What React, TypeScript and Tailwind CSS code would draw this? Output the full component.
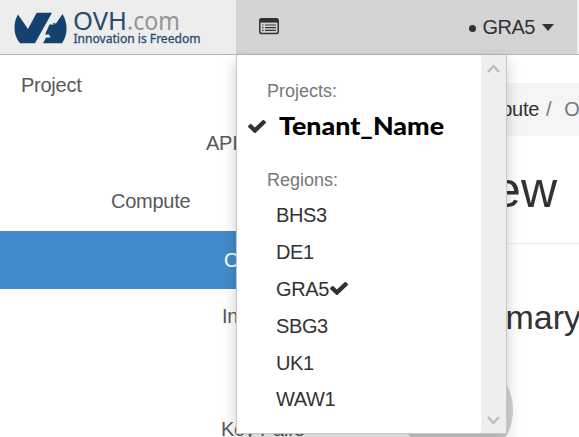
import React from "react";

const regions = ["BHS3", "DE1", "GRA5", "SBG3", "UK1", "WAW1"];
const activeRegion = "GRA5";

function Check({ className }: { className: string }) {
  return (
    <svg viewBox="0 0 1550 1188" preserveAspectRatio="none" className={className} fill="#303234">
      <path d="M1550 232q0 40-28 68L798 1024l-136 136q-28 28-68 28t-68-28L390 1024 28 662Q0 634 0 594t28-68l136-136q28-28 68-28t68 28l294 295L1250 28q28-28 68-28t68 28l136 136q28 28 28 68z" />
    </svg>
  );
}

function Logo() {
  return (
    <div className="flex items-start pl-[14px] pt-2">
      <svg width="54" height="38" viewBox="0 0 54 38" fill="#14426f" className="shrink-0">
        <path d="M4 6.5 L14 21 L22.7 4.7 H38 L21 35.3 H6 C-1 27 -1 15 4 6.5Z" />
        <path d="M35.5 16.5 H40 L38.5 15 L42 15.5 L48.5 6 C54 15 54 27 48 35.3 H29 L32 29.5 H36.5 L35 26.5 H31Z" />
      </svg>
      <div className="ml-[5px] flex flex-col whitespace-nowrap font-['Noto_Sans','Open_Sans',sans-serif]">
        <svg width="132" height="26" className="overflow-visible">
          <text x="0" y="21.5" fontSize="26" fill="#294b70" textLength="54" lengthAdjust="spacingAndGlyphs">OVH</text>
          <text x="54" y="21.5" fontSize="26" fill="#929497" textLength="53" lengthAdjust="spacingAndGlyphs">.com</text>
          <text x="0.5" y="35" fontSize="12.5" fill="#294b70" stroke="#294b70" strokeWidth="0.3" textLength="127" lengthAdjust="spacingAndGlyphs">Innovation is Freedom</text>
        </svg>
      </div>
    </div>
  );
}

function ListIcon() {
  return (
    <svg width="20" height="17" viewBox="0 0 20 17" className="mb-[2px] shrink-0">
      <rect x="0.8" y="0.8" width="18.4" height="14.8" rx="1.8" fill="none" stroke="#303234" strokeWidth="1.5" />
      <path d="M1 1h18v3.6H1z" fill="#303234" />
      <path d="M3 7h1.5M3 9.7h1.5M3 12.4h1.5M6 7h11M6 9.7h11M6 12.4h11" stroke="#303234" strokeWidth="1.2" />
    </svg>
  );
}

function Header() {
  return (
    <header className="flex h-[55px] border-b border-[#b5b5b5] bg-[#ededed]">
      <div className="w-[236px] shrink-0"><Logo /></div>
      <div className="flex w-[341px] shrink-0 items-center bg-[#d4d4d4] pl-[23px] pr-[23px] text-[#303234]">
        <ListIcon />
        <span className="ml-auto mt-[2px] h-[7px] w-[7px] rounded-full bg-[#303234]" />
        <span className="ml-[7px] text-[20px] leading-none tracking-[-0.5px]">GRA5</span>
        <span className="ml-[7px] h-0 w-0 border-x-[6px] border-t-[7px] border-x-transparent border-t-[#303234]" />
      </div>
    </header>
  );
}

function Sidebar() {
  return (
    <nav className="flex w-[400px] shrink-0 flex-col whitespace-nowrap text-[20px] tracking-[-0.25px] text-[#57595b]">
      <div className="flex h-[60px] shrink-0 items-center pl-[21px]">Project</div>
      <div className="flex h-[57px] shrink-0 items-center pb-[2px] pl-[206px]">API Access</div>
      <div className="flex h-[59px] shrink-0 items-center pb-[2px] pl-[111px]">Compute</div>
      <div className="flex h-[58px] shrink-0 items-center bg-[#428bca] pl-[224px] text-white">Overview</div>
      <div className="flex h-[56px] shrink-0 items-center pb-[2px] pl-[222px]">Instances</div>
      <div className="h-[56px] shrink-0" />
      <div className="flex h-[56px] shrink-0 items-center pl-[221px]">Key Pairs</div>
    </nav>
  );
}

function Content() {
  return (
    <main className="flex w-[179px] shrink-0 flex-col whitespace-nowrap pt-7 text-[#333]">
      <div className="flex h-[53px] shrink-0 items-center bg-[#f5f5f5] pb-0.5 text-[20px] tracking-[-0.3px]">
        <span className="flex w-[139px] shrink-0 justify-end">Compute</span>
        <span className="ml-[7px] text-[#777]">/</span>
        <span className="ml-[13px] text-[#777]">Overview</span>
      </div>
      <h1 className="flex h-[107px] w-[157px] shrink-0 items-center justify-end text-[50px] leading-none">Overview</h1>
      <hr className="border-[#eee]" />
      <h2 className="mt-[54px] flex w-[181px] shrink-0 justify-end text-[34px] leading-[38px]">Limit Summary</h2>
      <div className="ml-[3px] mt-[19px] h-[110px] w-[110px] shrink-0 rounded-full bg-[#d3d3d3]" />
    </main>
  );
}

function Chevron({ down = false }: { down?: boolean }) {
  return (
    <svg width="13" height="10" viewBox="0 0 13 10" className={down ? "rotate-180" : ""}>
      <path d="M1 8 6.5 2 12 8" fill="none" stroke="#bcbcbc" strokeWidth="2.5" />
    </svg>
  );
}

function ProjectMenu() {
  return (
    <div className="absolute left-[236px] top-[55px] flex h-[379px] w-[271px] border-x border-b border-[#c6c6c6] bg-white shadow-[0_6px_14px_rgba(0,0,0,0.2)]">
      <div className="flex w-[244px] flex-col pt-[22px]">
        <div className="flex h-[28px] items-center pl-[30px] text-[18px] text-[#777]">Projects:</div>
        <div className="flex h-[42px] items-center pl-[11px]">
          <Check className="h-[13px] w-[18px]" />
          <svg width="170" height="42" className="ml-[13px] font-[Lato,'Open_Sans',sans-serif]">
            <text x="0" y="29.5" fontSize="25" fontWeight="900" fill="#000" textLength="165" lengthAdjust="spacingAndGlyphs">Tenant_Name</text>
          </svg>
        </div>
        <div className="mt-[19px] flex h-[28px] items-center pl-[30px] text-[18px] text-[#777]">Regions:</div>
        <ul className="mt-[3px] text-[20px] tracking-[-0.4px] text-[#333]">
          {regions.map((region) => (
            <li key={region} className="flex h-[36.8px] items-center pl-[39px]">
              {region}
              {region === activeRegion && <Check className="ml-px h-[13px] w-[18px]" />}
            </li>
          ))}
        </ul>
      </div>
      <div className="flex w-[25px] flex-col items-center justify-between bg-[#eee] pb-[8px] pt-[9px]">
        <Chevron />
        <Chevron down />
      </div>
    </div>
  );
}

export default function App() {
  return (
    <div className="relative h-[437px] w-[579px] overflow-hidden bg-white font-['Liberation_Sans',Arial,sans-serif]">
      <Header />
      <div className="flex h-[382px] overflow-hidden">
        <Sidebar />
        <Content />
      </div>
      <ProjectMenu />
    </div>
  );
}
